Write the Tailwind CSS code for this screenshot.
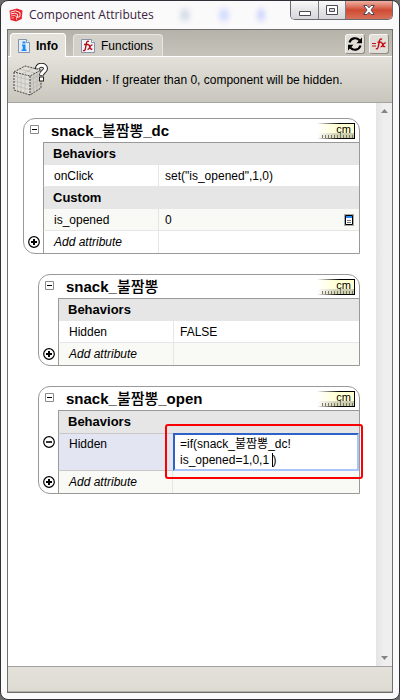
<!DOCTYPE html>
<html lang="en">
<head>
    <meta charset="UTF-8">
    <meta name="viewport" content="width=device-width, initial-scale=1.0">
    <title>Component Attributes</title>
    <script src="https://cdn.jsdelivr.net/npm/@tailwindcss/browser@4"></script>
</head>

<body class="bg-[#6b6b6b] font-['Liberation_Sans','Noto_Sans_CJK_KR',sans-serif] text-xs text-black">
    <!-- shared icons -->
    <svg class="absolute size-0">
        <defs>
            <linearGradient id="fadeTop"><stop offset="0" stop-color="#fff" /><stop offset=".5" stop-color="#ffffd4" /><stop offset="1" stop-color="#ffffd0" /></linearGradient>
            <linearGradient id="fadeLow"><stop offset="0" stop-color="#fff" /><stop offset=".5" stop-color="#d4d4b8" /><stop offset="1" stop-color="#c8c8aa" /></linearGradient>
            <linearGradient id="fadeLine"><stop offset="0" stop-color="#000" stop-opacity="0" /><stop offset=".6" stop-color="#000" /></linearGradient>
        </defs>
        <symbol id="plus" viewBox="0 0 12 12">
            <circle cx="6" cy="6" r="5.3" fill="#fff" stroke="#000" stroke-width="1.2" />
            <path d="M3 6h6M6 3v6" stroke="#000" stroke-width="2" />
        </symbol>
        <symbol id="minus" viewBox="0 0 12 12">
            <circle cx="6" cy="6" r="5.3" fill="#fff" stroke="#000" stroke-width="1.2" />
            <path d="M3 6h6" stroke="#000" stroke-width="1.6" />
        </symbol>
        <symbol id="collapse" viewBox="0 0 9 9">
            <path d="M.5.5h8v8h-8z" fill="#fff" stroke="#8a8a8a" />
            <path d="M2 4.5h5" stroke="#000" />
        </symbol>
        <symbol id="ruler" viewBox="0 0 38 16">
            <path d="M0 0h38v10H0z" fill="url(#fadeTop)" />
            <path d="M0 10h38v6H0z" fill="url(#fadeLow)" />
            <path d="M0 0h38v1H0zM0 15h38v1H0z" fill="url(#fadeLine)" />
            <path d="M37 0h1v16h-1z" />
            <path d="M5.500 12v3M8.500 12v3M11.500 12v3M14.500 12v3M17.500 12v3M20.500 12v3M26.500 12v3M29.500 12v3M32.500 12v3M35.500 12v3M23.500 10v5" stroke="#77775f" />
        </symbol>
    </svg>

    <div class="flex min-h-screen flex-col rounded-lg border border-[#303036] bg-[#fbfafb] px-[6px] pb-[6px]">
        <!-- title bar -->
        <header class="flex h-7 items-start justify-between rounded-t-lg">
            <div class="flex h-7 items-center gap-[6px] pl-[2px]">
                <svg class="size-[14px]" viewBox="0 0 14 14">
                    <path d="M.5 2.500L8 .5l5.500 2-.8 8.500L7 13.500 1.500 12z" fill="#e5252b" />
                    <path d="M1.500 4.200l5-1.400 4.500 1.700v4l-2.500 1V6.300L5.500 5.200 1.500 6" fill="none" stroke="#fff" stroke-width=".9" />
                    <path d="M2 8l3-.6 2.500 1V12M2.500 10.200l2.500-.5" fill="none" stroke="#fbb" stroke-width=".9" />
                </svg>
                <h1 class="font-['Open_Sans',sans-serif] text-xs text-[#3a2440]">Component Attributes</h1>
            </div>
            <div class="flex flex-1 items-center justify-around px-3 pt-2">
                <span class="h-3 w-2 rounded-full bg-slate-300 blur-[3px]"></span>
                <span class="h-3 w-2 rounded-full bg-indigo-200 blur-[3px]"></span>
                <span class="h-3 w-1 rounded-full bg-indigo-300 blur-[3px]"></span>
            </div>
            <div class="flex h-[19px] w-[103px] overflow-hidden rounded-b-[5px] border border-t-0 border-[#6b6b74]">
                <button aria-label="Minimize" class="flex flex-[28] items-center justify-center border-r border-[#7b7b84] bg-linear-to-b from-[#fafafa] via-[#e6e6e8] to-[#d8d8dc]">
                    <svg class="mt-[6px] h-[5px] w-3" viewBox="0 0 12 5"><path d="M.5.5h11v4H.5z" fill="#fff" stroke="#4a4a58" /></svg>
                </button>
                <button aria-label="Maximize" class="flex flex-[27] items-center justify-center border-r border-[#7b7b84] bg-linear-to-b from-[#fafafa] via-[#e6e6e8] to-[#d8d8dc]">
                    <svg class="h-[10px] w-3" viewBox="0 0 12 10"><path d="M.5.5h11v9H.5z" fill="#fff" stroke="#4a4a58" /><path d="M3.500 3.500h5v3h-5z" fill="#ddd" stroke="#4a4a58" /></svg>
                </button>
                <button aria-label="Close" class="flex flex-[47] items-center justify-center bg-linear-to-b from-[#eeb0a4] via-[#cf4a32] to-[#d9705a]">
                    <svg class="h-[10px] w-3" viewBox="0 0 12 10"><path d="M.7.5h3.300L6 2.800 8 .5h3.300L8 5l3.300 4.500H8L6 7.200 4 9.500H.7L4 5z" fill="#fff" stroke="#4a4a58" /></svg>
                </button>
            </div>
        </header>

        <main class="flex flex-1 flex-col border border-[#6e6e6e] bg-white">
            <!-- tabs -->
            <nav class="flex h-[27px] items-end justify-between border-b border-white bg-linear-to-b from-[#b5b2aa] to-[#c6c3bb] pl-[2px]">
                <div class="flex items-end gap-[7px]">
                    <button class="-mb-px flex h-6 w-14 items-center gap-[6px] rounded-t border border-b-0 border-white bg-[#e4e1da] pl-[7px] font-bold">
                        <svg class="h-[14px] w-3" viewBox="0 0 12 14">
                            <path d="M.5.5h8l3 3v10H.5z" fill="#e4eefb" stroke="#8793a8" />
                            <path d="M8.500.5v3h3" fill="#fff" stroke="#8793a8" />
                            <path d="M4.500 2.500h3v2h-3zM4 5.500h3.500v5H8.500v1.500H3.500v-1.500h1.200V7H4z" fill="#1c8df0" />
                        </svg>
                        Info
                    </button>
                    <button class="flex h-[22px] w-[90px] items-center gap-[6px] rounded-t border border-b-0 border-[#e8e6e1] bg-[#d3d0c9] pl-[7px]">
                        <svg class="size-[14px]" viewBox="0 0 14 14">
                            <path d="M.5.5h10l3 3v10H.5z" fill="#f2f4f8" stroke="#8793a8" />
                            <path d="M10.500.5v3h3" fill="#fff" stroke="#8793a8" />
                            <path d="M8 2.500c-1.500-.7-2.300.3-2.600 2L4.300 10c-.3 1.500-1.100 2-2.300 1.400M3 5.500h4.500M7 6.200c1.500-.8 1.500.8 2 2.300s.8 2.300 2.300 1.300M11.500 6c-1.500-.3-2.500 1.800-3 2.800s-1 1.800-2 1.400" fill="none" stroke="#b00d14" stroke-width="1.300" />
                        </svg>
                        Functions
                    </button>
                </div>
                <div class="flex gap-1 pr-[3px] pb-[2px]">
                    <button aria-label="Refresh" class="flex size-5 items-center justify-center rounded-[3px] border border-[#f5f4f1] border-r-[#8f8c86] border-b-[#8f8c86] bg-[#e2dfd8]">
                        <svg class="size-4 shrink-0" viewBox="0 0 16 16">
                            <path d="M2.500 6.500C4 1.800 9.500 1 12.500 4.200M13.500 9.500C12 14.200 6.500 15 3.500 11.800" fill="none" stroke="#000" stroke-width="2.200" />
                            <path d="M15 1.500v5.700H9.500zM1 14.500V8.800h5.500z" />
                        </svg>
                    </button>
                    <button aria-label="Toggle formula view" class="flex size-5 items-center justify-center rounded-[3px] border border-[#f5f4f1] border-r-[#8f8c86] border-b-[#8f8c86] bg-[#e2dfd8]">
                        <svg class="h-3 w-4 shrink-0" viewBox="0 0 16 12">
                            <path d="M1 5.500h4M1 8h4" stroke="#c40f18" stroke-width="1.200" />
                            <path d="M11 1.300C9.500.3 8.700 1.500 8.400 3L7.200 9c-.3 1.700-1.200 2.200-2.400 1.500M6.500 4.200h4M10 5c1.500-.5 1.500.8 1.900 2s.8 2.300 2.300 1.200M14.800 5c-1.500-.5-2.400 1.200-2.900 2.100S10.800 9 9.600 8.500" fill="none" stroke="#c40f18" stroke-width="1.400" />
                        </svg>
                    </button>
                </div>
            </nav>

            <!-- info strip -->
            <section class="flex h-[46px] items-center border-b border-[#a5a39e] bg-linear-to-b from-[#e4e1da] to-[#c9c6be] pl-[5px]">
                <svg class="h-[34px] w-9 shrink-0" viewBox="0 0 36 34">
                    <path d="M1 9l11-6 16 4v18l-11 7-16-5z" fill="#e0ded8" />
                    <path d="M17 13l11-6v18l-11 7z" fill="#cfcdc7" />
                    <path d="M4.500 10v17M8 11v18M12 12v18M1 13l16 4 11-6M1 18l16 4 11-6M1 22l16 5 11-7M20.500 11v18M24 9v18M6 6l16 4M9 11l12-6" fill="none" stroke="#b4b2ac" stroke-width=".6" />
                    <path d="M1 9l11-6 16 4-11 6zM1 9v18l16 5 11-7V7M17 13v19" fill="none" stroke="#444" stroke-dasharray="2 1" />
                    <path d="M24.500 6C24 1 32.500 1 32.500 5.500c0 3-4 3-4 7" fill="none" stroke="#222" stroke-width="5" />
                    <path d="M26 13.500h5v5h-5z" fill="#222" />
                    <path d="M24.500 5.500C24.500 1 32.500 1 32.500 5.500c0 3-4 3-4 6.500" fill="none" stroke="#fff" stroke-width="3" />
                    <path d="M27 14.500h3v3h-3z" fill="#fff" />
                </svg>
                <p class="pl-3"><b>Hidden</b> · If greater than 0, component will be hidden.</p>
            </section>

            <div class="flex flex-1">
                <div class="flex flex-1 flex-col gap-5 py-[15px] pr-4 pl-[15px]">
                    <!-- snack_불짬뽕_dc -->
                    <article class="rounded-xl rounded-br-none border border-[#999]">
                        <div class="flex h-6 pl-[6px]">
                            <button aria-label="Collapse" class="mt-[6px] size-[9px]"><svg class="size-[9px]"><use href="#collapse" /></svg></button>
                            <div class="ml-1 flex flex-1 items-center justify-between border-b border-[#999] pr-1 pl-2">
                                <h2 class="text-[15px] leading-5 font-bold">snack_<span class="font-medium">불짬뽕</span>_dc</h2>
                                <button class="relative flex h-4 w-[38px] justify-end pr-1 text-[11px] leading-3">
                                    <svg class="absolute inset-0 h-4 w-[38px]"><use href="#ruler" /></svg>
                                    <span class="relative">cm</span>
                                </button>
                            </div>
                        </div>
                        <table class="w-full table-fixed border-separate border-spacing-0">
                            <colgroup><col class="w-[19px]"><col class="w-[116px]"><col></colgroup>
                            <tbody>
                                <tr class="h-[22px]">
                                    <td></td>
                                    <th colspan="2" class="border-l border-[#999] bg-[#e6e6e6] p-0 pl-[9px] text-left text-[13px] leading-5">Behaviors</th>
                                </tr>
                                <tr class="h-[22px]">
                                    <td></td>
                                    <td class="border-r border-b border-l border-[#e6e6e6] border-l-[#999] p-0 pl-[10px]">onClick</td>
                                    <td class="border-b border-[#e6e6e6] p-0 pl-[6px]">set("is_opened",1,0)</td>
                                </tr>
                                <tr class="h-[22px]">
                                    <td></td>
                                    <th colspan="2" class="border-l border-[#999] bg-[#e6e6e6] p-0 pl-[9px] text-left text-[13px] leading-5">Custom</th>
                                </tr>
                                <tr class="h-[22px]">
                                    <td></td>
                                    <td class="border-r border-b border-l border-[#e6e6e6] border-l-[#999] bg-[#f9faf5] p-0 pl-[10px]">is_opened</td>
                                    <td class="border-b border-[#e6e6e6] bg-[#f9faf5] p-0 pr-[5px] pl-[6px]">
                                        <div class="flex items-center justify-between">
                                            0
                                            <button aria-label="Details">
                                                <svg class="h-3 w-[10px]" viewBox="0 0 10 12">
                                                    <path d="M0 0h10v12H0z" fill="#aaa" />
                                                    <path d="M1.500 1.500h7v9h-7z" fill="#fff" stroke="#000" />
                                                    <path d="M2 2h6v2H2z" fill="#2389f5" />
                                                    <path d="M3 6.500h4M3 8.500h4" stroke="#777" />
                                                </svg>
                                            </button>
                                        </div>
                                    </td>
                                </tr>
                                <tr class="h-[22px]">
                                    <td class="p-0 pl-1"><button aria-label="Add attribute" class="block size-3"><svg class="size-3"><use href="#plus" /></svg></button></td>
                                    <td class="border-r border-l border-[#e6e6e6] border-l-[#999] p-0 pl-[10px] italic">Add attribute</td>
                                    <td></td>
                                </tr>
                            </tbody>
                        </table>
                    </article>

                    <!-- snack_불짬뽕 -->
                    <article class="ml-[15px] rounded-xl rounded-br-none border border-[#999]">
                        <div class="flex h-6 pl-[6px]">
                            <button aria-label="Collapse" class="mt-[6px] size-[9px]"><svg class="size-[9px]"><use href="#collapse" /></svg></button>
                            <div class="ml-1 flex flex-1 items-center justify-between border-b border-[#999] pr-1 pl-2">
                                <h2 class="text-[15px] leading-5 font-bold">snack_<span class="font-medium">불짬뽕</span></h2>
                                <button class="relative flex h-4 w-[38px] justify-end pr-1 text-[11px] leading-3">
                                    <svg class="absolute inset-0 h-4 w-[38px]"><use href="#ruler" /></svg>
                                    <span class="relative">cm</span>
                                </button>
                            </div>
                        </div>
                        <table class="w-full table-fixed border-separate border-spacing-0">
                            <colgroup><col class="w-[19px]"><col class="w-[116px]"><col></colgroup>
                            <tbody>
                                <tr class="h-[22px]">
                                    <td></td>
                                    <th colspan="2" class="border-l border-[#999] bg-[#e6e6e6] p-0 pl-[9px] text-left text-[13px] leading-5">Behaviors</th>
                                </tr>
                                <tr class="h-[22px]">
                                    <td></td>
                                    <td class="border-r border-b border-l border-[#e6e6e6] border-l-[#999] p-0 pl-[10px]">Hidden</td>
                                    <td class="border-b border-[#e6e6e6] p-0 pl-[6px]">FALSE</td>
                                </tr>
                                <tr class="h-[22px]">
                                    <td class="p-0 pl-1"><button aria-label="Add attribute" class="block size-3"><svg class="size-3"><use href="#plus" /></svg></button></td>
                                    <td class="border-r border-l border-[#e6e6e6] border-l-[#999] bg-[#f9faf5] p-0 pl-[10px] italic">Add attribute</td>
                                    <td class="bg-[#f9faf5]"></td>
                                </tr>
                            </tbody>
                        </table>
                    </article>

                    <!-- snack_불짬뽕_open -->
                    <article class="ml-[15px] rounded-xl rounded-br-none border border-[#999]">
                        <div class="flex h-6 pl-[6px]">
                            <button aria-label="Collapse" class="mt-[6px] size-[9px]"><svg class="size-[9px]"><use href="#collapse" /></svg></button>
                            <div class="ml-1 flex flex-1 items-center justify-between border-b border-[#999] pr-1 pl-2">
                                <h2 class="text-[15px] leading-5 font-bold">snack_<span class="font-medium">불짬뽕</span>_open</h2>
                                <button class="relative flex h-4 w-[38px] justify-end pr-1 text-[11px] leading-3">
                                    <svg class="absolute inset-0 h-4 w-[38px]"><use href="#ruler" /></svg>
                                    <span class="relative">cm</span>
                                </button>
                            </div>
                        </div>
                        <table class="w-full table-fixed border-separate border-spacing-0">
                            <colgroup><col class="w-[19px]"><col class="w-[115px]"><col></colgroup>
                            <tbody>
                                <tr class="h-[22px]">
                                    <td></td>
                                    <th colspan="2" class="border-l border-[#999] bg-[#e6e6e6] p-0 pl-[9px] text-left text-[13px] leading-5">Behaviors</th>
                                </tr>
                                <tr class="h-[38px]">
                                    <td class="p-0 pt-[3px] pl-1 align-top"><button aria-label="Remove attribute" class="block size-3"><svg class="size-3"><use href="#minus" /></svg></button></td>
                                    <td class="border-y border-l border-[#c8c8c8] border-l-[#999] bg-[#e3e5f2] p-0 pt-[2px] pl-[10px] align-top"><label for="formula">Hidden</label></td>
                                    <td class="relative p-0">
                                        <textarea id="formula" spellcheck="false" class="block h-[38px] w-full resize-none overflow-hidden border-2 border-[#a8c4fb] border-t-[#2f62c8] border-l-[#2f62c8] bg-white pt-px pl-[5px] leading-4 outline-none">=if(snack_불짬뽕_dc!
is_opened=1,0,1 )</textarea>
                                        <!-- text caret -->
                                        <span class="absolute top-5 left-[99px] h-[14px] w-px bg-black"></span>
                                        <!-- highlight -->
                                        <span class="pointer-events-none absolute -top-[9px] -right-1 -bottom-2 -left-2 rounded-[3px] border-2 border-[#fb0000]"></span>
                                    </td>
                                </tr>
                                <tr class="h-[22px]">
                                    <td class="p-0 pl-1"><button aria-label="Add attribute" class="block size-3"><svg class="size-3"><use href="#plus" /></svg></button></td>
                                    <td class="border-r border-l border-[#e6e6e6] border-l-[#999] bg-[#f9faf5] p-0 pl-[10px] italic">Add attribute</td>
                                    <td class="bg-[#f9faf5]"></td>
                                </tr>
                            </tbody>
                        </table>
                    </article>
                </div>

                <!-- scrollbar -->
                <div class="flex w-4 flex-col items-center justify-between bg-linear-to-r from-[#e4e4e4] via-[#efefef] to-[#efefef] py-[6px]">
                    <svg class="h-1 w-[7px]" viewBox="0 0 7 4"><path d="M0 4l3.500-4L7 4z" fill="#858585" /></svg>
                    <svg class="h-1 w-[7px]" viewBox="0 0 7 4"><path d="M0 0l3.500 4L7 0z" fill="#858585" /></svg>
                </div>
            </div>

            <footer class="h-[26px] border-t border-b border-t-[#a0a0a0] border-b-[#b0aea8] bg-linear-to-b from-[#e4e1da] to-[#dedbd3]"></footer>
        </main>
    </div>
</body>

</html>
